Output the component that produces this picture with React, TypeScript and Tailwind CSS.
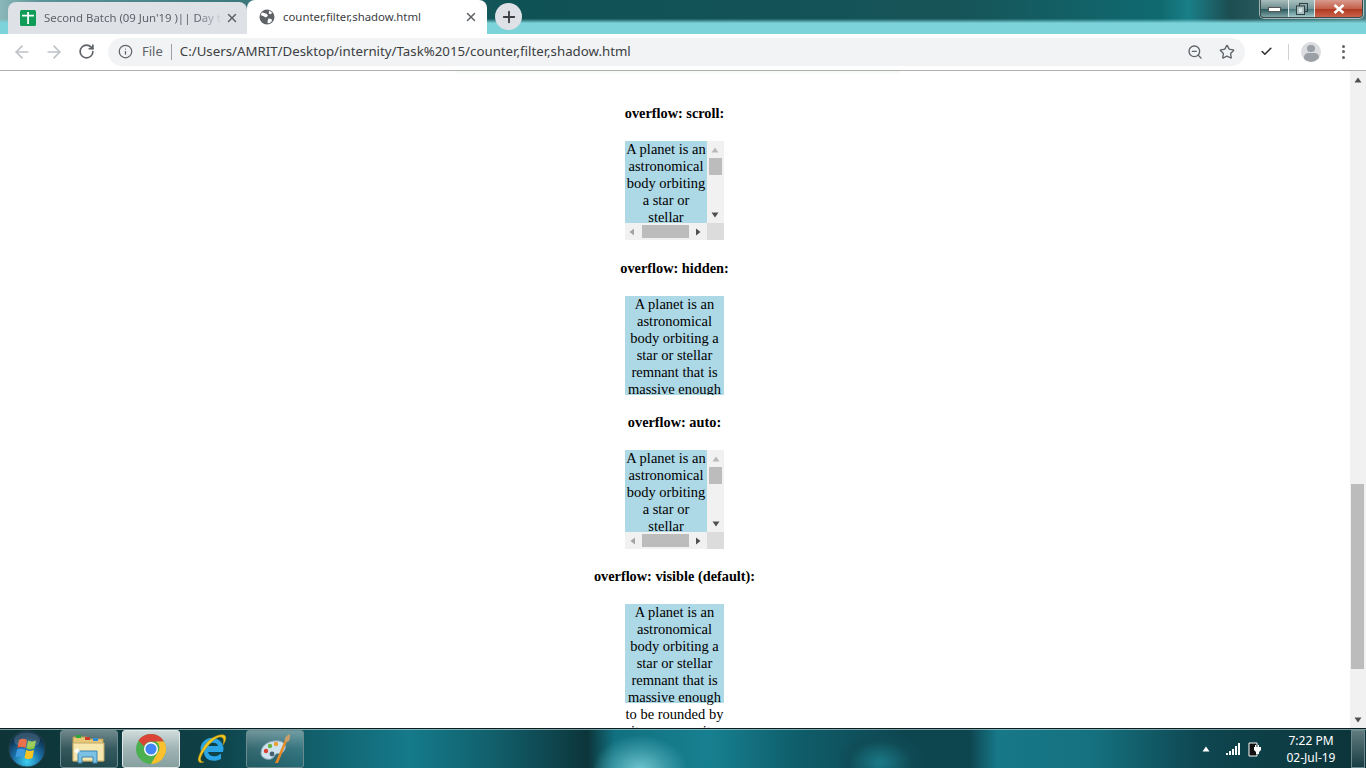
import { ArrowLeft, ArrowRight, RotateCw, Info, ZoomOut, Star, Check, X, Plus } from 'lucide-react'

const planet = 'A planet is an astronomical body orbiting a star or stellar remnant that is massive enough to be rounded by its own gravity'

function Triangle({ dir, color }: { dir: 'up' | 'down' | 'left' | 'right'; color: string }) {
    const points = {
        up: '4,1.5 7.5,6.5 0.5,6.5',
        down: '0.5,1.5 7.5,1.5 4,6.500',
        left: '6,0.5 6,7.5 1.5,4',
        right: '2,0.5 2,7.5 6.5,4',
    }
    return (
        <svg width="8" height="8" viewBox="0 0 8 8">
            <polygon points={points[dir]} fill={color} />
        </svg>
    )
}

// box with both scrollbars drawn
function ScrollBox() {
    return (
        <div className="w-[99px] h-[99px] grid grid-cols-[82px_17px] grid-rows-[82px_17px] bg-[#f1f1f1]">
            <div className="bg-[#add8e6] overflow-hidden text-center">{planet}</div>
            <div className="flex flex-col items-center">
                <div className="h-[17px] flex items-center justify-center"><Triangle dir="up" color="#b9b9b9" /></div>
                <div className="w-[13px] h-[17px] bg-[#bcbcbc]"></div>
                <div className="mt-auto h-[17px] flex items-center justify-center"><Triangle dir="down" color="#505050" /></div>
            </div>
            <div className="flex items-center">
                <div className="w-[15px] flex items-center justify-center"><Triangle dir="left" color="#a3a3a3" /></div>
                <div className="ml-[2px] w-[47px] h-[13px] bg-[#bcbcbc]"></div>
                <div className="w-[18px] flex items-center justify-center"><Triangle dir="right" color="#505050" /></div>
            </div>
            <div className="bg-[#dcdcdc]"></div>
        </div>
    )
}

function Section({ title, children }: { title: string; children: React.ReactNode }) {
    return (
        <section className="flex flex-col items-center">
            <h3 className="font-bold text-[14.3px] h-[17px] whitespace-nowrap">{title}</h3>
            <div className="mt-[19px] mb-[19.33px]">{children}</div>
        </section>
    )
}

function SheetsIcon() {
    return (
        <svg width="16" height="16" viewBox="0 0 16 16">
            <rect width="16" height="16" rx="1.5" fill="#0f9d58" />
            <path d="M2 4.800h5.200V2h1.800v2.800H14v1.700H9V14H7.200V6.500H2z" fill="#fff" />
        </svg>
    )
}

function GlobeIcon() {
    return (
        <svg width="16" height="16" viewBox="0 0 16 16">
            <circle cx="8" cy="8" r="7.5" fill="#5f6368" />
            <path d="M3 3.5c2 .2 3 1 4.5 1.3L9 6.5 7 8.5 4 7 1.6 6zM9.500 9.500l3 .5.5 2-2.500 2.300L8.500 14l.2-2.500zM10 1.500l3 2-1 1.800-2.200-.6z" fill="#fff" />
        </svg>
    )
}

function WindowControls() {
    return (
        <div className="flex h-[19px] mt-[-1px] border border-[#3c4a4c] rounded-b-[4px] overflow-hidden shadow-[0_0_0_1px_rgba(255,255,255,0.55)]">
            <div className="w-[28px] flex items-end justify-center pb-[5px] bg-[linear-gradient(180deg,#a9bdbd_0%,#6d8c8e_50%,#2c5a5e_55%,#7fa5a7_100%)] border-r border-[#dfe8e8]">
                <div className="w-[11px] h-[3px] bg-white border border-[#555] box-content"></div>
            </div>
            <div className="w-[26px] flex items-center justify-center bg-[linear-gradient(180deg,#a9c0c0_0%,#78999b_50%,#4b7a7e_55%,#a3c7c9_100%)] border-r border-[#dfe8e8]">
                <svg width="12" height="12" viewBox="0 0 12 12">
                    <rect x="3.5" y="0.5" width="8" height="8" fill="none" stroke="#2f3f42" />
                    <rect x="0.5" y="3" width="8" height="8.5" fill="#a9c0c0" stroke="#2f3f42" />
                    <rect x="3" y="5.5" width="3" height="3.5" fill="#dbe7e7" />
                </svg>
            </div>
            <div className="w-[47px] flex items-center justify-center bg-[linear-gradient(180deg,#d99a8c_0%,#c4604c_50%,#b03a22_55%,#c9634a_100%)]">
                <svg width="12" height="10" viewBox="0 0 12 10">
                    <path d="M1.500 1 10.500 9M10.500 1 1.500 9" stroke="#fff" strokeWidth="2.6" />
                </svg>
            </div>
        </div>
    )
}

function WindowsOrb() {
    return (
        <svg width="38" height="38" viewBox="0 0 38 38">
            <defs>
                <radialGradient id="orb" cx="50%" cy="85%" r="70%">
                    <stop offset="0%" stopColor="#3fd0f0" />
                    <stop offset="55%" stopColor="#1a6fa8" />
                    <stop offset="100%" stopColor="#0e3350" />
                </radialGradient>
            </defs>
            <circle cx="19" cy="19" r="18" fill="url(#orb)" stroke="#26424c" strokeWidth="1" />
            <path d="M11 10c3-1.600 5-1.400 8 0l-1.600 8c-3-1.300-5-1.300-8 0z" fill="#e8562c" />
            <path d="M20 10.500c3 1.400 5 1.300 8 0l-1.600 8c-3 1.300-5 1.300-8 0z" fill="#8cc63f" />
            <path d="M9 19.500c3-1.300 5-1.300 8 0l-1.500 8c-3-1.400-5-1.400-8 0z" fill="#3f9be0" />
            <path d="M18 20c3 1.300 5 1.300 8 0l-1.500 8c-3 1.400-5 1.400-8 0z" fill="#f7c325" />
            <ellipse cx="19" cy="10" rx="13" ry="7.500" fill="#fff" opacity="0.16" />
        </svg>
    )
}

function FolderIcon() {
    return (
        <svg width="34" height="30" viewBox="0 0 34 30">
            <path d="M1 3h14l2 2h14v22H1z" fill="#e6c877" stroke="#b59a55" />
            <rect x="4" y="1" width="5" height="3" fill="#2fa83a" />
            <rect x="13" y="3" width="5" height="3" fill="#c93b2a" />
            <rect x="21" y="4" width="5" height="3" fill="#2f8ad8" />
            <path d="M1 9h31v18H1z" fill="#f6e7ae" stroke="#c3a968" />
            <path d="M6 17h19v12H21v-6h-11v6H6z" fill="#7cc0e4" stroke="#3f88b5" />
            <path d="M5 14 8 17 5 20 2 17z" fill="#fff" opacity="0.85" />
        </svg>
    )
}

function ChromeIcon() {
    return (
        <svg width="30" height="30" viewBox="0 0 30 30">
            <circle cx="15" cy="15" r="15" fill="#4caf50" />
            <path d="M15 0a15 15 0 0 1 13 7.500H15a7.500 7.500 0 0 0-7 4.800L2.500 6.500A15 15 0 0 1 15 0z" fill="#db4437" />
            <path d="M28 7.500A15 15 0 0 1 15 30l6.500-11.200A7.500 7.500 0 0 0 20 7.500z" fill="#fbc02d" />
            <circle cx="15" cy="15" r="7" fill="#fff" />
            <circle cx="15" cy="15" r="5.600" fill="#4285f4" />
        </svg>
    )
}

function IeIcon() {
    return (
        <svg width="32" height="32" viewBox="0 0 32 32">
            <path d="M4 19a11.500 11 0 1 1 22 0H11c1 5 8 6 13 1.500v5.500c-8 4-17 1-17-7zM11 13h10c-.5-4.500-9-4.500-10 0z" fill="#2aa6e6" fillRule="evenodd" />
            <path d="M8 12C13 5 22 .5 27 2c3 1 2 6-1 10 1-5 1-7-2-8C19 3 8 14 4 24c-1 3 0 5 3 5-5 2-7-1-5-6 1-3 3-7 6-11z" fill="#f2c61f" stroke="#b58f10" strokeWidth="0.5" />
        </svg>
    )
}

function PaintIcon() {
    return (
        <svg width="32" height="32" viewBox="0 0 32 32">
            <path d="M2 20C2 11 12 7 20 8c7 1 8 7 4 11-3 3-6 0-8 3-2 4-5 5-9 4-3-1-5-3-5-6z" fill="#cfe3ee" stroke="#8aa6b5" />
            <circle cx="7" cy="18" r="2.200" fill="#d8432f" />
            <circle cx="11" cy="13" r="2.200" fill="#6cb33f" />
            <circle cx="17" cy="11" r="2.200" fill="#e9a030" />
            <circle cx="13" cy="21" r="2.400" fill="#47606e" />
            <path d="M16 30 26 7l2 1-9 22z" fill="#e88a24" />
            <path d="M26 8c-1-3 1-5 5-7 0 4 0 7-3 8z" fill="#c9a06a" />
        </svg>
    )
}

function TaskButton({ active, children }: { active?: boolean; children: React.ReactNode }) {
    return (
        <div className={active
            ? 'w-[58px] h-[38px] flex items-center justify-center rounded-[3px] border border-[#e2e8e8] bg-[linear-gradient(180deg,#cfdbdb_0%,#9fb3b3_50%,#86a0a0_100%)]'
            : 'w-[58px] h-[38px] flex items-center justify-center rounded-[3px] border border-[#6d8b8e] bg-[linear-gradient(180deg,rgba(255,255,255,0.4)_0%,rgba(255,255,255,0.16)_50%,rgba(255,255,255,0.08)_100%)]'}>
            {children}
        </div>
    )
}

export default function App() {
    return (
        <div className="h-screen overflow-hidden flex flex-col font-['Liberation_Serif',serif] bg-white">
            {/* Tab strip */}
            <div className="h-[34px] flex shrink-0 bg-[linear-gradient(180deg,rgba(125,211,218,0)_0%,rgba(125,211,218,0)_55%,rgba(125,211,218,1)_68%,rgba(125,211,218,1)_100%),linear-gradient(90deg,#8bb7b8_0%,#5a9498_3%,#0f5256_38%,#165458_70%,#0f6a70_85%,#1a7f88_87%,#1c4e52_90%,#4a7d80_100%)]">
                <div className="w-[8px]"></div>
                <div className="w-[239px] h-[32px] mt-[2px] flex items-center bg-[#dee1e6] rounded-t-[8px] pl-[12px] pr-[8px] font-['Noto_Sans',sans-serif] text-[11.4px] text-[#5f6368]">
                    <SheetsIcon />
                    <span className="ml-[8px] flex-1 whitespace-nowrap overflow-hidden leading-[16px] [mask-image:linear-gradient(90deg,#000_85%,transparent)]">Second Batch (09 Jun'19 )|| Day to</span>
                    <X size={14} strokeWidth={2.5} className="ml-[2px] text-[#5f6368]" />
                </div>
                <div className="w-[240px] h-[34px] flex items-center bg-white rounded-t-[8px] pl-[12px] pr-[9px] font-['Noto_Sans',sans-serif] text-[11.4px] text-[#3c4043]">
                    <GlobeIcon />
                    <span className="ml-[8px] flex-1 whitespace-nowrap">counter,filter,shadow.html</span>
                    <X size={14} strokeWidth={2.5} className="text-[#5f6368]" />
                </div>
                <div className="ml-[8px] mt-[3px] w-[27px] h-[27px] rounded-full bg-[#dee1e6] flex items-center justify-center">
                    <Plus size={18} strokeWidth={2.5} className="text-[#3c4043]" />
                </div>
                <div className="ml-auto pr-[3px]">
                    <WindowControls />
                </div>
            </div>

            {/* Toolbar */}
            <div className="h-[37px] shrink-0 flex items-center bg-white border-b border-[#b0b0b0] font-['Noto_Sans',sans-serif] pb-[1px]">
                <ArrowLeft size={20} className="ml-[12px] text-[#bdc1c6]" />
                <ArrowRight size={20} className="ml-[12px] text-[#bdc1c6]" />
                <RotateCw size={17} strokeWidth={2.4} className="ml-[14px] text-[#5f6368]" />
                <div className="ml-[13px] w-[1137px] h-[28px] rounded-full bg-[#f1f3f4] flex items-center pl-[10px] pr-[10px]">
                    <Info size={15} className="text-[#5f6368]" />
                    <span className="ml-[9px] text-[13px] text-[#5f6368]">File</span>
                    <div className="ml-[8px] w-px h-[16px] bg-[#9aa0a6]"></div>
                    <span className="ml-[8px] text-[13.27px] text-[#3c4043] flex-1 whitespace-nowrap">C:/Users/AMRIT/Desktop/internity/Task%2015/counter,filter,shadow.html</span>
                    <ZoomOut size={16} className="text-[#5f6368]" />
                    <Star size={16} strokeWidth={2} className="ml-[16px] text-[#5f6368]" />
                </div>
                <Check size={13} strokeWidth={3} className="ml-[15px] text-[#333]" />
                <div className="ml-[15px] w-px h-[16px] bg-[#cfd1d3]"></div>
                <div className="ml-[12px] w-[20px] h-[20px] rounded-full bg-[#dadce0] overflow-hidden flex flex-col items-center">
                    <div className="w-[8px] h-[8px] mt-[3px] rounded-full bg-[#9aa0a6]"></div>
                    <div className="w-[15px] h-[10px] mt-[1px] rounded-full bg-[#9aa0a6]"></div>
                </div>
                <div className="ml-[21px] flex flex-col gap-[2.5px]">
                    <div className="w-[3px] h-[3px] rounded-full bg-[#5f6368]"></div>
                    <div className="w-[3px] h-[3px] rounded-full bg-[#5f6368]"></div>
                    <div className="w-[3px] h-[3px] rounded-full bg-[#5f6368]"></div>
                </div>
            </div>

            {/* Page */}
            <div className="flex-1 min-h-0 flex">
                <main className="flex-1 overflow-hidden relative flex flex-col items-center pt-[34.4px] pr-px text-[14.5px] leading-[17px] text-black">
                    <div className="absolute top-0 left-[455px] w-[445px] h-[4px] bg-[linear-gradient(180deg,#f3f9f3,#ffffff)] rounded-b-full"></div>
                    <Section title="overflow: scroll:">
                        <ScrollBox />
                    </Section>
                    <Section title="overflow: hidden:">
                        <div className="w-[99px] h-[99px] bg-[#add8e6] overflow-hidden text-center">{planet}</div>
                    </Section>
                    <Section title="overflow: auto:">
                        <ScrollBox />
                    </Section>
                    <Section title="overflow: visible (default):">
                        <div className="w-[99px] h-[99px] bg-[#add8e6] text-center">{planet}</div>
                    </Section>
                </main>
                <div className="w-[16px] shrink-0 bg-[#f1f1f1] flex flex-col">
                    <div className="h-[17px] flex items-center justify-center"><Triangle dir="up" color="#505050" /></div>
                    <div className="mt-auto ml-px w-[13px] h-[185px] bg-[#bcbcbc]"></div>
                    <div className="mt-[42px] h-[17px] flex items-center justify-center"><Triangle dir="down" color="#505050" /></div>
                </div>
            </div>

            {/* Taskbar */}
            <footer className="h-[40px] shrink-0 flex items-center border-t border-[#0c1c1e] shadow-[inset_0_1px_0_rgba(190,220,222,0.6)] bg-[radial-gradient(ellipse_48px_36px_at_640px_42px,rgba(112,200,210,1)_0%,rgba(74,166,178,0.8)_50%,rgba(74,166,178,0)_100%),radial-gradient(ellipse_45px_32px_at_880px_34px,rgba(27,122,136,1)_0%,rgba(15,76,86,0.8)_70%,rgba(15,76,86,0)_100%),linear-gradient(90deg,#0e3438_0%,#0f4046_15%,#11606c_23%,#157a8a_30%,#11606c_36%,#0e424a_41%,#0c353a_43%,#117180_45%,#178090_52%,#0f5f6c_58%,#0e4650_66%,#0e4650_71%,#177888_73%,#15717f_80%,#0e4650_88%,#0c3338_100%)] font-['Noto_Sans',sans-serif] text-white">
                <div className="w-[54px] pl-[8px] flex items-center"><WindowsOrb /></div>
                <div className="ml-[6px]"><TaskButton><FolderIcon /></TaskButton></div>
                <div className="ml-[4px]"><TaskButton active><ChromeIcon /></TaskButton></div>
                <div className="w-[66px] flex items-center justify-center"><IeIcon /></div>
                <TaskButton><PaintIcon /></TaskButton>
                <div className="ml-auto flex items-center">
                    <Triangle dir="up" color="#ffffff" />
                    <svg width="16" height="12" viewBox="0 0 16 12" className="ml-[15px]">
                        <path d="M1 10h2v2H1zM4 8h2v4H4zM7 6h2v6H7zM10 3h2v9h-2zM13 0h2v12h-2z" fill="#fff" />
                    </svg>
                    <svg width="14" height="16" viewBox="0 0 14 16" className="ml-[7px]">
                        <path d="M1 2h8v13H1z" fill="#111" stroke="#fff" />
                        <path d="M7 4h1v2h2V4h1v2h2v3l-2 2v2H8v-2L6 9V6h1z" fill="#fff" />
                    </svg>
                    <div className="ml-[14px] w-[70px] text-center text-[12px] leading-[17px]">
                        <div>7:22 PM</div>
                        <div>02-Jul-19</div>
                    </div>
                    <div className="ml-[5px] mr-px w-[14px] h-[38px] border border-[#6d8b8e] bg-[linear-gradient(180deg,rgba(255,255,255,0.35),rgba(255,255,255,0.05))]"></div>
                </div>
            </footer>
        </div>
    )
}
